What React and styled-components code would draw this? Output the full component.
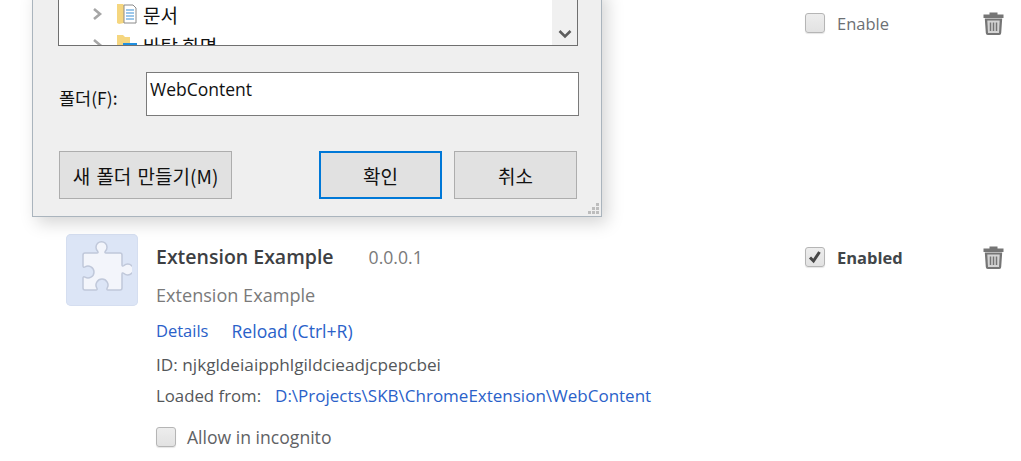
import React from "react";
import styled, { createGlobalStyle } from "styled-components";

const GlobalStyle = createGlobalStyle`
html, body {
  margin: 0;
  padding: 0;
  background: #fff;
  font-family: "Open Sans", "Noto Sans", "Noto Sans CJK KR", sans-serif;
}
`;

const Page = styled.div`
position: relative;
width: 1021px;
height: 461px;
overflow: hidden;
background: #fff;
`;

const List = styled.div`
display: flex;
flex-direction: column;
padding: 0 17px 0 66px;
`;

const ExtensionRow = styled.div`
display: flex;
height: ${props => props.height}px;
`;

const Icon = styled.div`
width: 72px;
height: 72px;
flex: none;
display: flex;
align-items: center;
justify-content: center;
background: #dce5f6;
border-radius: 5px;
box-shadow: inset 0 0 0 1px #d5def0;
`;

const Details = styled.div`
flex: 1;
padding-left: 18px;
display: flex;
flex-direction: column;
`;

const Title = styled.div`
display: flex;
align-items: baseline;
height: 46px;
padding-top: 9px;
box-sizing: border-box;
font-size: 19.5px;
font-weight: 600;
color: #3d4043;
`;

const Version = styled.span`
margin-left: 35px;
font-size: 17.6px;
font-weight: 400;
color: #7a7a7a;
`;

const Description = styled.div`
height: 36px;
font-size: 18.1px;
line-height: 30px;
color: #7a7a7a;
`;

const Links = styled.div`
display: flex;
gap: 23px;
height: 33px;
line-height: 30px;
`;

const Link = styled.a`
font-size: ${props => props.size || 17}px;
color: #2a61c9;
white-space: nowrap;
`;

const Info = styled.div`
display: flex;
height: 31px;
font-size: ${props => props.size}px;
line-height: 32px;
color: #54575a;
white-space: nowrap;
`;

const Path = styled(Link)`
margin-left: 14px;
`;

const Incognito = styled.label`
display: flex;
align-items: center;
gap: 11px;
margin-top: 14px;
font-size: 17.6px;
color: #5f6265;
`;

const Controls = styled.div`
width: 199px;
height: ${props => props.height}px;
flex: none;
display: flex;
align-items: center;
gap: 12px;
`;

const Box = styled.span`
position: relative;
width: 18px;
height: 18px;
flex: none;
display: block;
border: 1px solid #b5b5b5;
border-radius: 3px;
background: linear-gradient(#ededed, #e2e2e2);
box-shadow: 0 1px 1px rgba(0, 0, 0, 0.1);
`;

const Check = styled.svg`
position: absolute;
left: 0;
top: 0;
`;

const EnableLabel = styled.span`
font-size: 16.5px;
font-weight: ${props => (props.on ? 700 : 400)};
color: ${props => (props.on ? "#414649" : "#6c7074")};
`;

const Trash = styled.svg`
margin-left: auto;
flex: none;
`;

const Dialog = styled.div`
position: absolute;
left: 32px;
top: -11px;
width: 568px;
height: 226px;
box-sizing: content-box;
display: flex;
flex-direction: column;
background: #efefef;
border: 1px solid #aab4bd;
box-shadow: 5px 6px 16px rgba(0, 0, 0, 0.17);
`;

const Tree = styled.div`
display: flex;
height: 55px;
margin: 0 23px 0 25px;
border: 1px solid #6f6f6f;
border-top: none;
background: #fff;
overflow: hidden;
`;

const Nodes = styled.div`
flex: 1;
padding-left: 33px;
display: flex;
flex-direction: column;
`;

const Node = styled.div`
flex: none;
display: flex;
align-items: center;
height: 32px;
margin-top: ${props => props.first ? "8px" : "-1px"};
font-size: 19px;
color: #111;
font-family: "Noto Sans CJK KR", sans-serif;
`;

const Caret = styled.svg`
margin-right: 13px;
`;

const Folder = styled.svg`
margin-right: 6px;
`;

const Scroll = styled.div`
width: 25px;
flex: none;
display: flex;
align-items: flex-end;
justify-content: center;
padding-bottom: 6px;
box-sizing: border-box;
background: #f0f0f0;
`;

const FolderRow = styled.div`
display: flex;
align-items: center;
margin: 26px 22px 0 26px;
`;

const FieldLabel = styled.span`
width: 87px;
flex: none;
padding-top: 6px;
font-size: 17.5px;
color: #111;
font-family: "Noto Sans CJK KR", sans-serif;
`;

const Field = styled.div`
flex: 1;
height: 44px;
box-sizing: border-box;
padding: 2px 3px;
border: 1px solid #7a7a7a;
background: #fff;
font-size: 17.5px;
line-height: 28px;
color: #111;
`;

const Buttons = styled.div`
display: flex;
margin: 35px 24px 0 26px;
`;

const Button = styled.div`
height: 48px;
width: ${props => props.width}px;
margin-left: ${props => props.gap || 0}px;
box-sizing: border-box;
display: flex;
align-items: center;
justify-content: center;
background: #e1e1e1;
border: ${props => (props.focused ? "2px solid #0078d7" : "1px solid #adadad")};
font-size: 19px;
word-spacing: 2px;
color: #111;
white-space: nowrap;
font-family: "Noto Sans CJK KR", sans-serif;
`;

const Grip = styled.svg`
position: absolute;
right: 2px;
bottom: 2px;
`;

const PuzzleIcon = () => (
  <svg width="60" height="60" viewBox="0 0 60 60">
    <path
      d="M13 13H25c1 0 1.500-.7.5-2a5.500 5.500 0 1 1 8 0c-1 1.300-.5 2 .5 2H48q2 0 2 2V25c0 1 .7 1.500 2 .5a5.500 5.500 0 1 1 0 8c-1.300-1-2-.5-2 .5V48q0 2-2 2H36c-1 0-1.500-.7-.8-2a6 6 0 1 0-10.400 0c.7 1.300.2 2-.8 2H13q-2 0-2-2V38c0-1 .7-1.500 2-.8a6 6 0 1 0 0-10.400c-1.300.7-2 .2-2-.8V15q0-2 2-2z"
      fill="#f3f5fb"
      stroke="#c0c8da"
      strokeWidth="1.500"
    />
  </svg>
);

const TrashIcon = () => (
  <Trash width="21" height="23" viewBox="0 0 21 23">
    <path d="M6.500 2.500V.5h8v2h6v3.500H.5V2.500z" fill="#757575" />
    <path d="M1.800 6.500h17.400l-1 14.500q0 2-2 2H4.800q-2 0-2-2z" fill="#757575" />
    <path d="M4.300 8.500h12.400l-.7 12.500H5z" fill="#d4d4d4" />
    <path d="M7.500 10.500v8.500M10.500 10.500v8.500M13.500 10.500v8.500" stroke="#757575" strokeWidth="1.500" />
  </Trash>
);

const Checkbox = ({ checked }) => (
  <Box>
    {checked && (
      <Check width="18" height="18" viewBox="0 0 18 18">
        <path d="M4 9.500l3.500 3.500L13.500 4" fill="none" stroke="#484848" strokeWidth="3" />
      </Check>
    )}
  </Box>
);

const Control = ({ on, height, label }) => (
  <Controls height={height}>
    <Checkbox checked={on} />
    <EnableLabel on={on}>{label}</EnableLabel>
    <TrashIcon />
  </Controls>
);

const CaretIcon = () => (
  <Caret width="12" height="14" viewBox="0 0 12 14">
    <path d="M2 2l6 5-6 5" fill="none" stroke="#a6a6a6" strokeWidth="2.600" />
  </Caret>
);

const DocsIcon = () => (
  <Folder width="20" height="22" viewBox="0 0 20 22">
    <path d="M0 1h6l1 1v18l-5 1-2-1z" fill="#f5d67f" />
    <path d="M7 2h9l3 3v15H7z" fill="#fff" stroke="#8a8a8a" />
    <path d="M9 7h8M9 10h8M9 13h8M9 16h8" stroke="#3b8fd6" strokeWidth="1.200" />
  </Folder>
);

const DesktopIcon = () => (
  <Folder width="20" height="22" viewBox="0 0 20 22">
    <path d="M0 1h6l2 2h5v8H0z" fill="#f5d67f" />
    <path d="M6 9h14v9H6z" fill="#1f8fe0" />
  </Folder>
);

const App = () => (
  <Page>
    <GlobalStyle />
    <List>
      <ExtensionRow height={234}>
        <Details />
        <Control height={46} label="Enable" />
      </ExtensionRow>
      <ExtensionRow height={227}>
        <Icon>
          <PuzzleIcon />
        </Icon>
        <Details>
          <Title>
            Extension Example
            <Version>0.0.0.1</Version>
          </Title>
          <Description>Extension Example</Description>
          <Links>
            <Link size={16.5}>Details</Link>
            <Link size={17.6}>Reload (Ctrl+R)</Link>
          </Links>
          <Info size={17.2}>ID: njkgldeiaipphlgildcieadjcpepcbei</Info>
          <Info size={16.8}>
            Loaded from:
            <Path>D:\Projects\SKB\ChromeExtension\WebContent</Path>
          </Info>
          <Incognito>
            <Checkbox />
            Allow in incognito
          </Incognito>
        </Details>
        <Control on height={46} label="Enabled" />
      </ExtensionRow>
    </List>
    <Dialog>
      <Tree>
        <Nodes>
          <Node first>
            <CaretIcon />
            <DocsIcon />
            문서
          </Node>
          <Node>
            <CaretIcon />
            <DesktopIcon />
            바탕 화면
          </Node>
        </Nodes>
        <Scroll>
          <svg width="14" height="10" viewBox="0 0 14 10">
            <path d="M1.500 2L7 7.500 12.500 2" fill="none" stroke="#5d5d5d" strokeWidth="2.600" />
          </svg>
        </Scroll>
      </Tree>
      <FolderRow>
        <FieldLabel>폴더(F):</FieldLabel>
        <Field>WebContent</Field>
      </FolderRow>
      <Buttons>
        <Button width={173}>새 폴더 만들기(M)</Button>
        <Button width={123} gap={87} focused>확인</Button>
        <Button width={123} gap={12}>취소</Button>
      </Buttons>
      <Grip width="12" height="12" viewBox="0 0 12 12">
        <path d="M9 1h3v3H9zM5 5h3v3H5zM9 5h3v3H9zM1 9h3v3H1zM5 9h3v3H5zM9 9h3v3H9z" fill="#bdbdbd" />
      </Grip>
    </Dialog>
  </Page>
);

export default App;
